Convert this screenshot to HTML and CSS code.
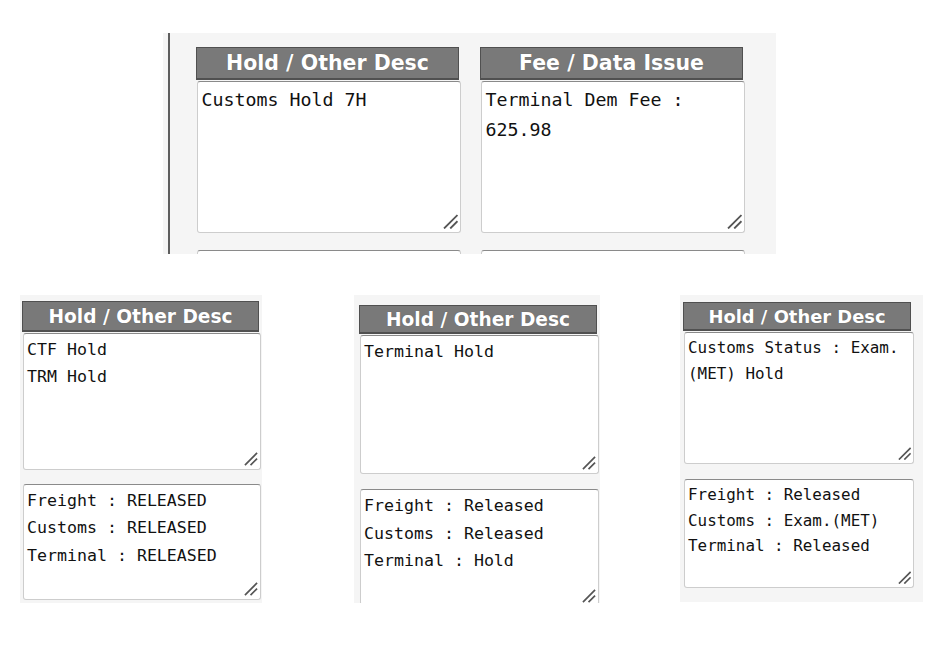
FILE: index.html
```html
<!DOCTYPE html>
<html lang="en">
<head>
<meta charset="utf-8">
<title>Hold / Other Desc</title>
<link rel="stylesheet" href="styles.css">
</head>
<body>
<div class="canvas">
  <div class="shot shot-top">
    <div class="rule"></div>
    <div class="cols">
      <div class="col">
        <div class="head">Hold / Other Desc</div>
        <div class="box box-a">
          <div class="line">Customs Hold 7H</div>
          <svg class="grip" viewBox="0 0 15 15"><path d="M14 1 L1 14 M14 7 L7 14"/></svg>
        </div>
        <div class="box box-b"></div>
      </div>
      <div class="col">
        <div class="head">Fee / Data Issue</div>
        <div class="box box-a">
          <div class="line">Terminal Dem Fee :</div>
          <div class="line">625.98</div>
          <svg class="grip" viewBox="0 0 15 15"><path d="M14 1 L1 14 M14 7 L7 14"/></svg>
        </div>
        <div class="box box-b"></div>
      </div>
    </div>
  </div>

  <div class="row">
    <div class="shot shot-bl">
      <div class="col">
        <div class="head">Hold / Other Desc</div>
        <div class="box box-a">
          <div class="line">CTF Hold</div>
          <div class="line">TRM Hold</div>
          <svg class="grip" viewBox="0 0 15 15"><path d="M14 1 L1 14 M14 7 L7 14"/></svg>
        </div>
        <div class="box box-b">
          <div class="line">Freight : RELEASED</div>
          <div class="line">Customs : RELEASED</div>
          <div class="line">Terminal : RELEASED</div>
          <svg class="grip" viewBox="0 0 15 15"><path d="M14 1 L1 14 M14 7 L7 14"/></svg>
        </div>
      </div>
    </div>

    <div class="shot shot-mid">
      <div class="col">
        <div class="head">Hold / Other Desc</div>
        <div class="box box-a">
          <div class="line">Terminal Hold</div>
          <svg class="grip" viewBox="0 0 15 15"><path d="M14 1 L1 14 M14 7 L7 14"/></svg>
        </div>
        <div class="box box-b">
          <div class="line">Freight : Released</div>
          <div class="line">Customs : Released</div>
          <div class="line">Terminal : Hold</div>
          <svg class="grip grip-low" viewBox="0 0 15 15"><path d="M14 1 L1 14 M14 7 L7 14"/></svg>
        </div>
      </div>
    </div>

    <div class="shot shot-right">
      <div class="col">
        <div class="head">Hold / Other Desc</div>
        <div class="box box-a">
          <div class="line">Customs Status : Exam.</div>
          <div class="line">(MET) Hold</div>
          <svg class="grip" viewBox="0 0 15 15"><path d="M14 1 L1 14 M14 7 L7 14"/></svg>
        </div>
        <div class="box box-b">
          <div class="line">Freight : Released</div>
          <div class="line">Customs : Exam.(MET)</div>
          <div class="line">Terminal : Released</div>
          <svg class="grip" viewBox="0 0 15 15"><path d="M14 1 L1 14 M14 7 L7 14"/></svg>
        </div>
      </div>
    </div>
  </div>
</div>
</body>
</html>
```

FILE: styles.css
```css
* { box-sizing: border-box; }

html, body {
  margin: 0;
  padding: 0;
  background: #ffffff;
}

.canvas {
  width: 938px;
  height: 646px;
  overflow: hidden;
  display: flex;
  flex-direction: column;
  align-items: flex-start;
}

.shot {
  background: #f5f5f5;
  overflow: hidden;
  --mono: 16.6px;
  --lh: 27.3px;
  --hfs: 18.6px;
  --grip: 14px;
  --padt: 2px;
  --padl: 3px;
}

.col {
  display: flex;
  flex-direction: column;
  align-self: flex-start;
  flex: none;
}

.head {
  flex: none;
  background: #797979;
  border: 1px solid #505050;
  border-bottom-width: 2px;
  color: #ffffff;
  font-family: "DejaVu Sans", Verdana, sans-serif;
  font-weight: bold;
  font-size: var(--hfs);
  display: flex;
  align-items: center;
  justify-content: center;
  white-space: nowrap;
  text-shadow: 0 0 1px rgba(0, 0, 0, 0.25);
}

.box {
  position: relative;
  background: #ffffff;
  border: 1px solid #cdcdcd;
  border-top-color: #8a8a8a;
  border-radius: 3px;
  margin-left: 1px;
  padding: var(--padt) 2px 0 var(--padl);
  font-family: "DejaVu Sans Mono", "Liberation Mono", monospace;
  font-size: var(--mono);
  line-height: var(--lh);
  color: #111111;
  flex: none;
}

.box-a { margin-top: 1px; }

.line { white-space: pre; }

.grip {
  position: absolute;
  right: 2px;
  bottom: 3px;
  width: var(--grip);
  height: var(--grip);
  fill: none;
  stroke: #555555;
  stroke-width: 1.8;
}

/* ---------- top screenshot ---------- */
.shot-top {
  margin: 33px 0 0 163px;
  width: 613px;
  height: 221px;
  display: flex;
  --mono: 18.27px;
  --lh: 30px;
  --hfs: 20.5px;
  --grip: 15.5px;
  --padt: 3px;
  --padl: 3.5px;
}

.rule {
  width: 2px;
  margin-left: 5px;
  background: #5e5e5e;
  flex: none;
}

.cols {
  display: flex;
  align-items: flex-start;
  gap: 19px;
  padding: 14px 0 0 26px;
}

.shot-top .col { width: 265px; }
.shot-top .head { width: 263px; height: 33px; }
.shot-top .box { width: 264px; }
.shot-top .box-a { height: 152px; }
.shot-top .box-b { height: 100px; margin-top: 17px; }

/* ---------- bottom row ---------- */
.row {
  display: flex;
  align-items: flex-start;
  margin-top: 41px;
}

.shot-bl {
  margin-left: 20px;
  width: 242px;
  height: 308px;
  padding: 6px 0 0 2px;
}
.shot-bl .head { width: 237px; height: 31px; }
.shot-bl .box { width: 238px; }
.shot-bl .box-a { height: 137px; }
.shot-bl .box-b { height: 116px; margin-top: 14px; }

.shot-mid {
  margin-left: 92px;
  width: 246px;
  height: 308px;
  padding: 10px 0 0 5px;
  --lh: 27.5px;
}
.shot-mid .head { width: 238px; height: 29px; }
.shot-mid .box { width: 239px; }
.shot-mid .box-a { height: 139px; }
.shot-mid .box-b { height: 116px; margin-top: 15px; }
.shot-mid .grip-low { bottom: 1px; }

.shot-right {
  margin-left: 80px;
  width: 243px;
  height: 307px;
  padding: 7px 0 0 3px;
  --mono: 15.9px;
  --lh: 25.7px;
  --hfs: 17.9px;
  --grip: 13.5px;
}
.shot-right .head { width: 228px; height: 29px; }
.shot-right .box { width: 230px; }
.shot-right .box-a { height: 132px; }
.shot-right .box-b { height: 109px; margin-top: 15px; }
```
